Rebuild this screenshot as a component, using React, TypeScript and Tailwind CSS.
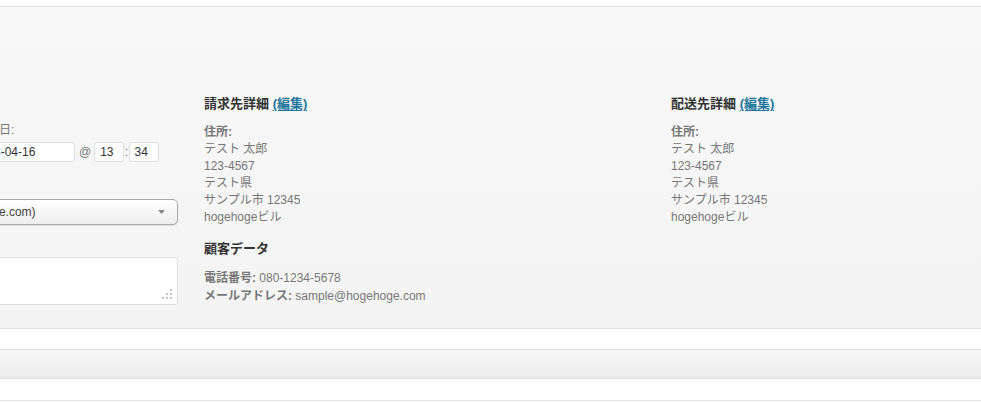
import React from "react";

const font = { fontFamily: '"Liberation Sans", "Noto Sans CJK JP", sans-serif' };

function Address() {
  return (
    <div className="mt-[12px] text-[12px] leading-[17px] text-[#777]">
      <div className="font-bold">住所:</div>
      <div>テスト 太郎</div>
      <div>123-4567</div>
      <div>テスト県</div>
      <div>サンプル市 12345</div>
      <div>hogehogeビル</div>
    </div>
  );
}

function Heading({ title }: { title: string }) {
  return (
    <h4 className="text-[13px] leading-[17px] font-bold text-[#333]">
      {title}{" "}
      <a href="#" className="text-[#21759b] underline underline-offset-2">
        (編集)
      </a>
    </h4>
  );
}

export default function App() {
  return (
    <div className="w-[981px] h-[402px] bg-white overflow-hidden" style={font}>
      <div className="h-[6px]" />

      {/* order data panel */}
      <div className="h-[323px] border-y border-[#dfdfdf] bg-gradient-to-b from-[#f8f8f8] to-[#f4f4f4] pt-[88px] overflow-hidden">
        <div className="flex items-start ml-[-25px]">
          {/* general details */}
          <div className="w-[203px] shrink-0 flex flex-col text-[12px] text-[#777]">
            <label className="mt-[27px] leading-[17px]">注文日:</label>
            <div className="mt-[3px] ml-[-4px] flex items-center">
              <div className="w-[104px] h-[20px] bg-white border border-[#dfdfdf] rounded-[3px] pl-[2px] leading-[18px] text-[#333]">
                2013-04-16
              </div>
              <span className="ml-[4px] mr-[3px] leading-[18px]">@</span>
              <div className="w-[30px] h-[20px] bg-white border border-[#dfdfdf] rounded-[3px] pl-[5px] leading-[18px] text-[#333]">
                13
              </div>
              <span className="px-[0.5px] leading-[18px]">:</span>
              <div className="w-[30px] h-[20px] bg-white border border-[#dfdfdf] rounded-[3px] pl-[5px] leading-[18px] text-[#333]">
                34
              </div>
            </div>

            <div className="mt-[37px] h-[26px] ml-[-180px] w-[383px] flex items-center justify-between border border-[#aaa] rounded-[5px] bg-gradient-to-b from-white to-[#eee] shadow-[0_1px_1px_rgba(0,0,0,0.1)] pl-[8px] pr-[12px] text-[#444]">
              <span className="whitespace-nowrap">テスト 太郎 (#1 – sample@hogehoge.com)</span>
              <svg width="7" height="4" viewBox="0 0 7 4">
                <path d="M0 0h7L3.5 4z" fill="#888" />
              </svg>
            </div>

            <div className="relative mt-[32px] h-[48px] bg-white border border-[#dfdfdf] rounded-[3px]">
              <svg className="absolute right-[4px] bottom-[4px]" width="11" height="11" viewBox="0 0 11 11">
                <rect x="8" y="0" width="2" height="2" fill="#c4c4c4" />
                <rect x="4" y="4" width="2" height="2" fill="#c4c4c4" />
                <rect x="8" y="4" width="2" height="2" fill="#c4c4c4" />
                <rect x="0" y="8" width="2" height="2" fill="#c4c4c4" />
                <rect x="4" y="8" width="2" height="2" fill="#c4c4c4" />
                <rect x="8" y="8" width="2" height="2" fill="#c4c4c4" />
              </svg>
            </div>
          </div>

          {/* billing */}
          <div className="ml-[26px] w-[467px] shrink-0">
            <Heading title="請求先詳細" />
            <Address />
            <h4 className="mt-[14px] text-[13px] leading-[17px] font-bold text-[#333]">顧客データ</h4>
            <div className="mt-[12px] text-[12px] leading-[18px] text-[#777]">
              <div>
                <span className="font-bold">電話番号:</span> 080-1234-5678
              </div>
              <div>
                <span className="font-bold">メールアドレス:</span> sample@hogehoge.com
              </div>
            </div>
          </div>

          {/* shipping */}
          <div className="flex-1">
            <Heading title="配送先詳細" />
            <Address />
          </div>
        </div>
      </div>

      <div className="h-[20px]" />
      <div className="h-[30px] border-y border-[#dfdfdf] bg-gradient-to-b from-[#f7f7f7] to-[#ececec]" />
      <div className="h-[21px]" />
      <div className="border-t border-[#dfdfdf]" />
    </div>
  );
}
